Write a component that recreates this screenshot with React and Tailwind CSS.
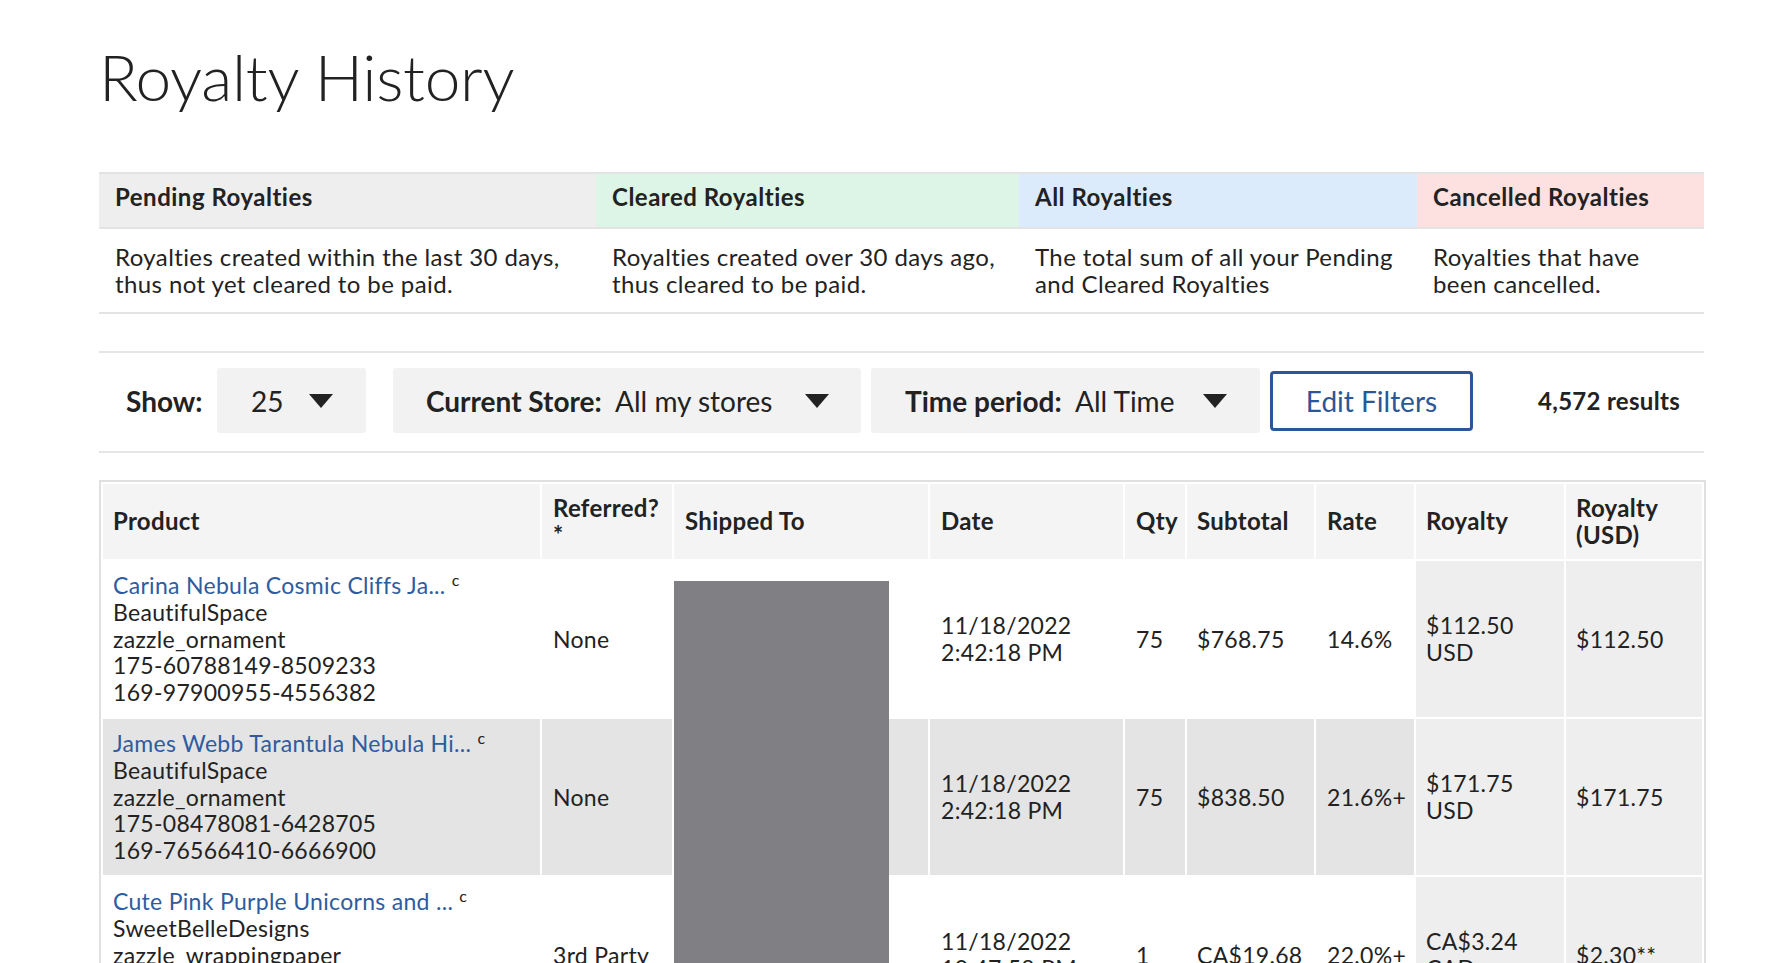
import React from "react";

const summary = [
  {
    title: "Pending Royalties",
    text: ["Royalties created within the last 30 days,", "thus not yet cleared to be paid."],
    head: "bg-[#eeeeee]",
    width: "w-[497px]",
  },
  {
    title: "Cleared Royalties",
    text: ["Royalties created over 30 days ago,", "thus cleared to be paid."],
    head: "bg-[#dcf5e6]",
    width: "w-[423px]",
  },
  {
    title: "All Royalties",
    text: ["The total sum of all your Pending", "and Cleared Royalties"],
    head: "bg-[#dcebfb]",
    width: "w-[398px]",
  },
  {
    title: "Cancelled Royalties",
    text: ["Royalties that have", "been cancelled."],
    head: "bg-[#fde0e0]",
    width: "w-[287px]",
  },
];

const rows = [
  {
    product: "Carina Nebula Cosmic Cliffs Ja...",
    store: "BeautifulSpace",
    type: "zazzle_ornament",
    ids: ["175-60788149-8509233", "169-97900955-4556382"],
    referred: "None",
    date: ["11/18/2022", "2:42:18 PM"],
    qty: "75",
    subtotal: "$768.75",
    rate: "14.6%",
    royalty: ["$112.50", "USD"],
    usd: "$112.50",
  },
  {
    product: "James Webb Tarantula Nebula Hi...",
    store: "BeautifulSpace",
    type: "zazzle_ornament",
    ids: ["175-08478081-6428705", "169-76566410-6666900"],
    referred: "None",
    date: ["11/18/2022", "2:42:18 PM"],
    qty: "75",
    subtotal: "$838.50",
    rate: "21.6%+",
    royalty: ["$171.75", "USD"],
    usd: "$171.75",
  },
  {
    product: "Cute Pink Purple Unicorns and ...",
    store: "SweetBelleDesigns",
    type: "zazzle_wrappingpaper",
    ids: ["175-31540682-4419027", "169-24871306-5531284"],
    referred: "3rd Party",
    date: ["11/18/2022", "10:47:58 PM"],
    qty: "1",
    subtotal: "CA$19.68",
    rate: "22.0%+",
    royalty: ["CA$3.24", "CAD"],
    usd: "$2.30**",
  },
];

const Caret = () => (
  <svg width="24" height="14" viewBox="0 0 24 14" className="shrink-0">
    <polygon points="0,0 24,0 12,14" fill="#222222" />
  </svg>
);

const App = () => {
  return (
    <div
      className="min-h-screen bg-white text-[#222222]"
      style={{ fontFamily: "Lato, 'Open Sans', sans-serif" }}
    >
      <div className="ml-[99px] w-[1605px] pt-[45px]">
        <h1 className="text-[64px] leading-none font-light tracking-[-0.3px]">
          Royalty History
        </h1>

        {/* summary of royalty types */}
        <div className="mt-[63px] flex border-y-2 border-[#e3e3e3]">
          {summary.map((s) => (
            <div key={s.title} className={s.width}>
              <div
                className={`${s.head} h-[55px] border-b-2 border-[#e3e3e3] px-[16px] pt-[9px] text-[24px] leading-[27px] font-bold tracking-[0.5px]`}
              >
                {s.title}
              </div>
              <div className="h-[83px] px-[16px] pt-[14px] text-[24px] leading-[27px] tracking-[0.4px]">
                {s.text.map((t) => (
                  <div key={t}>{t}</div>
                ))}
              </div>
            </div>
          ))}
        </div>

        {/* filters */}
        <div className="mt-[37px] flex items-center border-y-2 border-[#e5e5e5] pt-[15px] pb-[18px] pl-[27px] pr-[24px] text-[28px]">
          <span className="w-[91px] font-bold">Show:</span>
          <div className="flex h-[65px] w-[149px] items-center justify-between rounded-[3px] bg-[#f2f2f2] pl-[34px] pr-[33px]">
            <span>25</span>
            <Caret />
          </div>
          <div className="ml-[27px] flex h-[65px] w-[468px] items-center justify-between rounded-[3px] bg-[#f2f2f2] pl-[33px] pr-[32px]">
            <span>
              <span className="font-bold">Current Store:</span>&nbsp; All my stores
            </span>
            <Caret />
          </div>
          <div className="ml-[10px] flex h-[65px] w-[389px] items-center justify-between rounded-[3px] bg-[#f2f2f2] pl-[34px] pr-[33px]">
            <span>
              <span className="font-bold">Time period:</span>&nbsp; All Time
            </span>
            <Caret />
          </div>
          <button className="ml-[10px] h-[60px] w-[203px] rounded-[4px] border-[3px] border-[#2b5799] text-[#2b5799]">
            Edit Filters
          </button>
          <span className="ml-auto text-[24px] font-bold tracking-[0.3px]">4,572 results</span>
        </div>

        {/* royalties table */}
        <div className="relative mt-[27px]">
          <table className="w-full table-fixed border-separate border-spacing-[2px] border-2 border-[#e0e0e0] text-[23px] leading-[26.7px] tracking-[0.3px]">
            <colgroup>
              <col className="w-[437px]" />
              <col className="w-[130px]" />
              <col className="w-[254px]" />
              <col className="w-[193px]" />
              <col className="w-[60px]" />
              <col className="w-[127px]" />
              <col className="w-[98px]" />
              <col className="w-[148px]" />
              <col className="w-[136px]" />
            </colgroup>
            <thead>
              <tr className="bg-[#f4f4f4] text-left text-[24px] font-bold">
                <th className="h-[75px] px-[10px] align-middle">Product</th>
                <th className="px-[11px] align-middle">
                  Referred?
                  <br />*
                </th>
                <th className="px-[11px] align-middle">Shipped To</th>
                <th className="px-[11px] align-middle">Date</th>
                <th className="px-[11px] align-middle">Qty</th>
                <th className="px-[10px] align-middle">Subtotal</th>
                <th className="px-[11px] align-middle">Rate</th>
                <th className="px-[10px] align-middle">Royalty</th>
                <th className="px-[10px] align-middle">
                  Royalty
                  <br />
                  (USD)
                </th>
              </tr>
            </thead>
            <tbody>
              {rows.map((r, i) => {
                const bg = i % 2 === 1 ? "bg-[#e4e4e4]" : "bg-white";
                return (
                  <tr key={r.product}>
                    <td className={`${bg} h-[156px] px-[10px] py-[10px] align-middle`}>
                      <a href="#" className="text-[#2e5ca0]">
                        {r.product}
                      </a>{" "}
                      <sup className="text-[16px]">c</sup>
                      <div>{r.store}</div>
                      <div>{r.type}</div>
                      {r.ids.map((id) => (
                        <div key={id}>{id}</div>
                      ))}
                    </td>
                    <td className={`${bg} px-[11px] align-middle`}>{r.referred}</td>
                    <td className={`${bg} px-[11px] align-middle`}></td>
                    <td className={`${bg} px-[11px] align-middle`}>
                      <div>{r.date[0]}</div>
                      <div>{r.date[1]}</div>
                    </td>
                    <td className={`${bg} px-[11px] align-middle`}>{r.qty}</td>
                    <td className={`${bg} px-[10px] align-middle`}>{r.subtotal}</td>
                    <td className={`${bg} px-[11px] align-middle`}>{r.rate}</td>
                    <td className="bg-[#eeeeee] px-[10px] align-middle">
                      <div>{r.royalty[0]}</div>
                      <div>{r.royalty[1]}</div>
                    </td>
                    <td className="bg-[#eeeeee] px-[10px] align-middle">{r.usd}</td>
                  </tr>
                );
              })}
            </tbody>
          </table>
          {/* redacted address block */}
          <div className="absolute top-[101px] left-[575px] h-[420px] w-[215px] bg-[#808084]" />
        </div>
      </div>
    </div>
  );
};

export default App;
